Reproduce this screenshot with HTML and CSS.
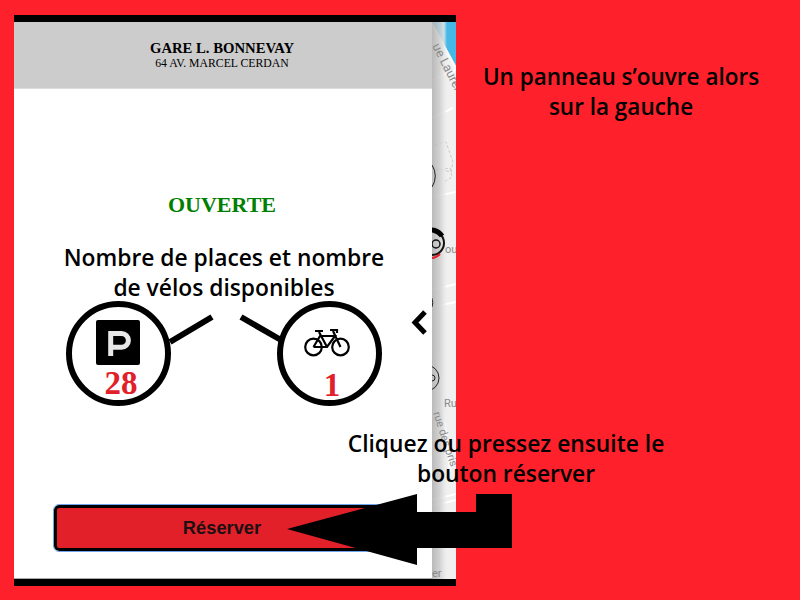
FILE: index.html
```html
<!DOCTYPE html>
<html>
<head>
    <title>Réserver un vélo</title>
    <link rel="stylesheet" href="styles.css">
</head>
<body>
    <div class="phone">
        <div class="panel">
            <div class="station-header">
                <div class="station-name">GARE L. BONNEVAY</div>
                <div class="station-address">64 AV. MARCEL CERDAN</div>
            </div>
            <div class="panel-body">
                <div class="station-status">OUVERTE</div>
                <div class="counters">
                    <div class="counter">
                        <svg class="counter-icon counter-icon-p" width="44" height="45" viewBox="0 0 44 45">
                            <rect width="44" height="45" rx="2" fill="#000"/>
                            <path d="M14.700 36V13.500H25.500a6.900 6.900 0 0 1 0 13.800H14.700" fill="none" stroke="#e8e8e8" stroke-width="5"/>
                        </svg>
                        <div class="counter-value">28</div>
                    </div>
                    <div class="counter counter-bikes">
                        <svg class="counter-icon counter-icon-bike" width="46" height="30" viewBox="0 0 46 30">
                            <g fill="none" stroke="#000" stroke-width="2.200">
                                <circle cx="9.500" cy="20" r="8.300"/>
                                <circle cx="36.500" cy="20" r="8.300"/>
                                <path d="M9.500 20L16 9H31L23 20H9.500M15 5L23 20M29 4L36.500 20M11 4H19M26 3H33V6"/>
                            </g>
                        </svg>
                        <div class="counter-value">1</div>
                    </div>
                </div>
                <button class="reserve-button" type="button">Réserver</button>
            </div>
        </div>
        <div class="map">
            <svg width="24" height="557" viewBox="0 0 24 557">
                <defs>
                    <linearGradient id="shade" x1="0" x2="1" y1="0" y2="0">
                        <stop offset="0" stop-color="#b0b0b0"/>
                        <stop offset="0.5" stop-color="#cccccc"/>
                        <stop offset="0.8" stop-color="#e6e6e6"/>
                        <stop offset="1" stop-color="#e6e6e6" stop-opacity="0"/>
                    </linearGradient>
                </defs>
                <rect width="24" height="557" fill="#f0f0f0"/>
                <polygon points="0,0 24,0 24,44" fill="#45b8e8"/>
                <polygon points="0,0 24,44 24,50 0,4" fill="#fafafa"/>
                <path d="M0 58L24 48M0 96L21 86M0 175L24 170M0 268L24 262M0 285L24 280M6 335L18 450M0 478L24 472M0 484L24 478" stroke="#fff" stroke-width="2" fill="none"/>
                <path d="M3 123L14 120L21 140L19 150L3 146M3 148L18 146L20 155L12 160" stroke="#c8c8c8" stroke-width="1" stroke-dasharray="3 2" fill="none"/>
                <rect width="15" height="557" fill="url(#shade)" opacity="0.85"/>
                <text class="map-label map-label-large" transform="translate(0 24) rotate(63)">ue Lauren</text>
                <text class="map-label" transform="translate(1 391) rotate(72)">rue des pris</text>
                <text class="map-label" x="12" y="385">Ru</text>
                <text class="map-label" x="13" y="231">ou</text>
                <text class="map-label" x="0" y="555">er</text>
                <path d="M0 143A20 20 0 0 1 0 165" stroke="#222" stroke-width="1" fill="none"/>
                <circle cx="0" cy="221" r="12" fill="none" stroke="#111" stroke-width="2"/>
                <path d="M-8 210A13 13 0 0 1 10 214" stroke="#000" stroke-width="5" fill="none"/>
                <path d="M-6 235A13 13 0 0 0 8 232" stroke="#e2202a" stroke-width="2" fill="none"/>
                <circle cx="4" cy="222" r="4" fill="none" stroke="#111" stroke-width="1.500"/>
                <path d="M-6 270A12 12 0 0 1 0 285" stroke="#222" stroke-width="1" fill="none"/>
                <circle cx="-6" cy="356" r="13" fill="none" stroke="#222" stroke-width="1"/>
                <circle cx="0" cy="356" r="3" fill="none" stroke="#222" stroke-width="1"/>
            </svg>
        </div>
    </div>

    <div class="note note-panel">Un panneau s’ouvre alors<br>sur la gauche</div>
    <div class="note note-counters">Nombre de places et nombre<br>de vélos disponibles</div>
    <div class="note note-button">Cliquez ou pressez ensuite le<br>bouton réserver</div>

    <svg class="overlay" width="800" height="600" viewBox="0 0 800 600">
        <path d="M170 342L212 317M241 317L281 340" stroke="#000" stroke-width="6" fill="none"/>
        <path d="M425 312L415 322.500L425 333" stroke="#000" stroke-width="5" fill="none"/>
        <polygon points="287,529 417,494 417,512 476,512 476,494 512,494 512,548 417,548 417,565" fill="#000"/>
    </svg>
</body>
</html>
```

FILE: styles.css
```css
body {
    margin: 0;
    width: 800px;
    height: 600px;
    overflow: hidden;
    position: relative;
    background: #fe202a;
}

.phone {
    display: flex;
    box-sizing: border-box;
    width: 442px;
    height: 571px;
    margin-left: 14px;
    position: relative;
    top: 15px;
    border-top: 7px solid #000;
    border-bottom: 7px solid #000;
}

.panel {
    display: flex;
    flex-direction: column;
    width: 418px;
    background: #fff;
    border-bottom: 1px solid #aaa;
}

.station-header {
    box-sizing: border-box;
    height: 67px;
    padding-top: 18px;
    padding-right: 2px;
    text-align: center;
    background: #ccc;
    border-bottom: 1px solid #ddd;
    color: #000;
    font-family: "Liberation Serif", serif;
}

.station-name {
    font-size: 14.700px;
    font-weight: bold;
    line-height: 17px;
}

.station-address {
    font-size: 11.750px;
    line-height: 13px;
}

.panel-body {
    flex: 1;
    display: flex;
    flex-direction: column;
    align-items: center;
}

.station-status {
    margin-top: 104px;
    margin-right: 2px;
    color: #008000;
    font-family: "Liberation Serif", serif;
    font-size: 22px;
    font-weight: bold;
    line-height: 24px;
}

.counters {
    display: flex;
    gap: 106px;
    margin-top: 84px;
    margin-left: 2px;
}

.counter {
    box-sizing: border-box;
    display: flex;
    flex-direction: column;
    align-items: center;
    width: 105px;
    height: 105px;
    padding-top: 13px;
    border: 6px solid #000;
    border-radius: 50%;
}

.counter-icon {
    display: block;
    flex-shrink: 0;
}

.counter-icon-p {
    margin-right: 2px;
}

.counter-icon-bike {
    margin-right: 6px;
}

.counter-bikes {
    padding-top: 20px;
}

.counter-value {
    margin-top: 1px;
    margin-left: 5px;
    color: #e2202a;
    font-family: "Liberation Serif", serif;
    font-size: 33px;
    font-weight: bold;
    line-height: 34px;
}

.counter-bikes .counter-value {
    margin-top: 11px;
}

.reserve-button {
    box-sizing: border-box;
    width: 338px;
    height: 46px;
    margin-top: 99px;
    padding-top: 1px;
    padding-right: 8px;
    background: #e2202a;
    border: 3px solid #000;
    border-radius: 5px;
    outline: 1px solid #6fa5f0;
    color: #1c1012;
    font-family: "Liberation Sans", sans-serif;
    font-size: 18.300px;
    font-weight: bold;
}

.map {
    flex: 1;
    overflow: hidden;
}

.map svg {
    display: block;
    overflow: hidden;
}

.map-label {
    fill: #8a8a8a;
    font-family: Roboto, sans-serif;
    font-size: 11px;
}

.map-label-large {
    font-size: 12.500px;
}

.note {
    position: absolute;
    color: #000;
    font-family: "Open Sans", sans-serif;
    font-size: 22.800px;
    font-weight: 600;
    line-height: 30px;
    text-align: center;
    white-space: nowrap;
}

.note-panel {
    left: 421px;
    width: 400px;
    top: 62px;
    font-size: 22.500px;
}

.note-counters {
    left: 24px;
    width: 400px;
    top: 243px;
}

.note-button {
    left: 306px;
    width: 400px;
    top: 429px;
}

.overlay {
    position: absolute;
    left: 0;
    top: 0;
}
```
